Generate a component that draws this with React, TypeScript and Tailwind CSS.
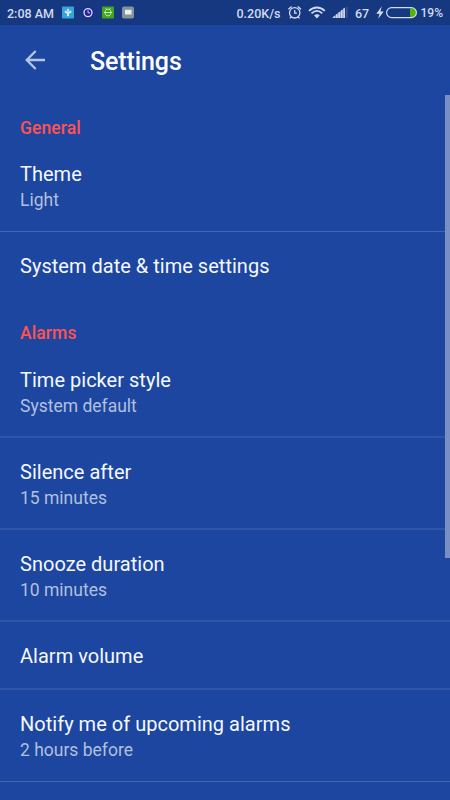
import React from 'react';

type Item = { title: string; sub?: string; divider: 'thin' | 'soft' | 'none'; tight?: boolean };

const general: Item[] = [
  { title: 'Theme', sub: 'Light', divider: 'thin' },
  { title: 'System date & time settings', divider: 'none' },
];
const alarms: Item[] = [
  { title: 'Time picker style', sub: 'System default', divider: 'soft', tight: true },
  { title: 'Silence after', sub: '15 minutes', divider: 'soft', tight: true },
  { title: 'Snooze duration', sub: '10 minutes', divider: 'soft' },
  { title: 'Alarm volume', divider: 'soft' },
  { title: 'Notify me of upcoming alarms', sub: '2 hours before', divider: 'thin' },
];

const dividers = {
  thin: 'h-px bg-[#4266b1]',
  soft: 'h-[2px] bg-[#3055a7]',
  none: 'h-0',
};

function Row({ title, sub, divider, tight }: Item) {
  return (
    <div className={'flex flex-col ' + (sub ? 'h-[92px]' : 'h-[68px]')}>
      <div className="flex min-h-0 flex-1 flex-col px-5 pt-[21px]">
        <div className="h-[27px] shrink-0 whitespace-nowrap text-[20px] leading-[26px] tracking-[0.02px] text-[#f5f8ff]">{title}</div>
        {sub && (
          <div className={'h-[25px] shrink-0 whitespace-nowrap text-[17.5px] text-[#b1c0df] ' + (tight ? 'leading-[24px]' : 'leading-[25px]')}>
            {sub}
          </div>
        )}
      </div>
      <div className={'shrink-0 ' + dividers[divider]} />
    </div>
  );
}

function Section({ name, items, tight }: { name: string; items: Item[]; tight?: boolean }) {
  return (
    <section>
      <h2 className={'h-[46px] px-5 text-[17.5px] font-medium leading-[22px] tracking-[0.1px] text-[#ff5252] ' + (tight ? 'pt-[22px]' : 'pt-[23px]')}>{name}</h2>
      {items.map((i) => (
        <Row key={i.title} {...i} />
      ))}
    </section>
  );
}

function StatusBar() {
  return (
    <div className="flex h-[25px] shrink-0 items-center bg-[#163880] pl-[7px] text-[12.5px] font-medium leading-[23px] text-[#d2dbed]">
      <span className="mt-0.5 w-[55px] whitespace-nowrap">2:08 AM</span>
      <svg className="h-[25px] w-[72px] shrink-0" viewBox="62 0 72 25" fill="none">
        <rect x="62" y="6.5" width="12" height="12" rx="1" fill="#36a5dc" />
        <path d="M68 9v6.5" stroke="#e8f6ff" strokeWidth="1.2" />
        <path d="M64.8 10.8h2v1.3h2.6v-1.3h2v1.6L68.6 14h-1.2l-2.6-1.6zM66.6 10.3 68 8.6l1.4 1.7z" fill="#d4eefa" />
        <circle cx="68" cy="15.3" r="1.1" fill="#e8f6ff" />
        <circle cx="88" cy="12.6" r="5.8" fill="#24249a" />
        <circle cx="88" cy="12.6" r="4" stroke="#d9def5" strokeWidth="1.3" />
        <path d="M88 10.2v2.6h2" stroke="#d9def5" strokeWidth="0.9" />
        <rect x="102" y="6.5" width="12" height="12" rx="1" fill="#43a51b" />
        <path d="M105.2 11.6c0-3.3 5.6-3.3 5.6 0v1.6c0 3.5-5.6 3.5-5.6 0zM104 12.5h8M105.6 8.2l1 1.4M110.4 8.2l-1 1.4" stroke="#d2ecc8" strokeWidth="0.9" />
        <rect x="122" y="6.5" width="12" height="12" rx="2" fill="#84949f" />
        <rect x="125" y="9.8" width="6.5" height="4.7" fill="#edf0f1" />
      </svg>
      <span className="ml-[102.5px] mt-0.5 w-[50px] shrink-0 whitespace-nowrap">0.20K/s</span>
      <svg className="h-[25px] w-[65px] shrink-0" viewBox="287 0 65 25" fill="none" stroke="#d2dbed">
        <circle cx="294.7" cy="12.8" r="5.2" strokeWidth="1.3" />
        <path d="M294.7 10v3.2h2.2M288.4 9.3l3.2-2.8M301 9.3l-3.2-2.8M291.2 16.8l-1.3 1.6M298.2 16.8l1.3 1.6" strokeWidth="1.3" />
        <path d="M309 10.8c4.8-4.4 11-4.4 15.8 0M311.5 13.3c3.3-3 7.5-3 10.8 0" strokeWidth="1.8" />
        <path d="M314 15.3q2.9-2.3 5.8 0l-2.9 3.2z" fill="#d2dbed" stroke="none" />
        <path d="m332 18 13-10.4V18z" fill="#8398c0" stroke="none" />
        <path d="M334.2 18v-1.7M336.7 18v-3.7M339.2 18v-5.7M341.7 18v-7.7M344.2 18v-9.7" strokeWidth="1.5" />
        <path d="M346.8 18V7" stroke="#3d5993" strokeWidth="1.5" />
      </svg>
      <span className="ml-[3.5px] mt-0.5 w-[20px] shrink-0">67</span>
      <svg className="h-[25px] w-[43px] shrink-0" viewBox="375 0 43 25" fill="none">
        <path d="m381.8 6.3-5.5 7.4h3.2l-1.3 5.1 5.5-7.2h-3.3z" fill="#d2dbed" />
        <path d="M410 8.2h2.2a4.5 4.5 0 0 1 0 9H410z" fill="#50b600" />
        <rect x="386.6" y="7.6" width="29.8" height="10" rx="5" stroke="#d2dbed" strokeWidth="1.2" />
      </svg>
      <span className="ml-[2.5px] mt-0.5 whitespace-nowrap text-[12px]">19%</span>
    </div>
  );
}

export default function App() {
  return (
    <main className="relative flex h-[800px] w-[450px] flex-col overflow-hidden bg-[#1c469f] font-['Roboto',sans-serif]">
      <StatusBar />
      <header className="flex h-[69px] shrink-0 items-center pl-[25px] pt-[2px]">
        <svg className="mb-px h-5 w-5" viewBox="0 0 20 20" fill="none" stroke="#b6c5e3" strokeWidth="2.3">
          <path d="M20 10H1.7M10.7 1l-9 9 9 9" />
        </svg>
        <h1 className="ml-[45px] mt-[2px] text-[25px] font-medium leading-[30px] tracking-[-0.1px] text-white">Settings</h1>
      </header>
      <div className="shrink-0">
        <Section name="General" items={general} />
        <Section name="Alarms" items={alarms} tight />
      </div>
      <div className="absolute right-0 top-[95px] h-[463px] w-[5px] bg-[#778fc5]" />
    </main>
  );
}
